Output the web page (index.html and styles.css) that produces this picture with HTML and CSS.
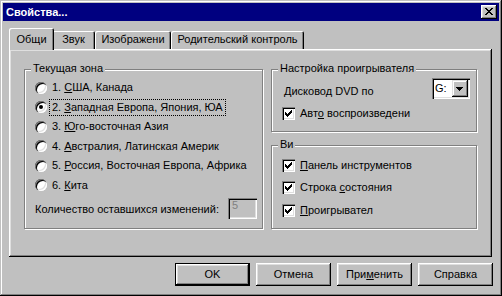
FILE: index.html
```html
<!DOCTYPE html>
<html>

<head>
  <meta charset="utf-8">
  <meta name="viewport" content="width=device-width, initial-scale=1">
  <title>Свойства...</title>
  <link rel="stylesheet" href="styles.css">
</head>

<body>
  <div class="window">
    <div class="titlebar">
      <span class="title">Свойства...</span>
      <button class="close-btn" type="button" title="Закрыть">
        <svg width="8" height="7" viewBox="0 0 8 7" shape-rendering="crispEdges">
          <path fill="#000" d="M0 0h2v1h-2z M6 0h2v1h-2z M1 1h2v1h-2z M5 1h2v1h-2z M2 2h4v1h-4z M3 3h2v1h-2z M2 4h4v1h-4z M1 5h2v1h-2z M5 5h2v1h-2z M0 6h2v1h-2z M6 6h2v1h-2z" />
        </svg>
      </button>
    </div>

    <div class="content">
      <div class="tabs">
        <div class="tab tab-general active">Общи</div>
        <div class="tab tab-sound">Звук</div>
        <div class="tab tab-picture">Изображени</div>
        <div class="tab tab-parental">Родительский контроль</div>
      </div>

      <div class="panel">
        <!-- регион -->
        <div class="group zone-group">
          <div class="group-title">Текущая зона</div>
          <div class="group-body">
            <div class="radio-list">
              <label class="radio-row"><span class="radio"></span><span class="caption">1. <u>С</u>ША, Канада</span></label>
              <label class="radio-row"><span class="radio checked"></span><span class="caption focused">2. <u>З</u>ападная Европа, Япония, ЮА</span></label>
              <label class="radio-row"><span class="radio"></span><span class="caption">3. <u>Ю</u>го-восточная Азия</span></label>
              <label class="radio-row"><span class="radio"></span><span class="caption">4. <u>А</u>встралия, Латинская Америк</span></label>
              <label class="radio-row"><span class="radio"></span><span class="caption">5. <u>Р</u>оссия, Восточная Европа, Африка</span></label>
              <label class="radio-row"><span class="radio"></span><span class="caption">6. <u>К</u>ита</span></label>
            </div>
            <div class="changes-row">
              <span>Количество оставшихся изменений:</span>
              <span class="textbox disabled">5</span>
            </div>
          </div>
        </div>

        <div class="right-col">
          <div class="group player-group">
            <div class="group-title">Настройка проигрывателя</div>
            <div class="group-body">
              <div class="drive-row">
                <span class="drive-label">Дисковод DVD по</span>
                <div class="combo">
                  <span class="combo-value">G:</span>
                  <span class="combo-btn">
                    <svg width="7" height="4" viewBox="0 0 7 4" shape-rendering="crispEdges">
                      <path fill="#000" d="M0 0h7v1h-7z M1 1h5v1h-5z M2 2h3v1h-3z M3 3h1v1h-1z" />
                    </svg>
                  </span>
                </div>
              </div>
              <label class="check-row">
                <span class="checkbox">
                  <svg width="7" height="7" viewBox="0 0 7 7" shape-rendering="crispEdges">
                    <path fill="#000" d="M6 0h1v1h-1z M5 1h2v1h-2z M0 2h1v1h-1z M4 2h3v1h-3z M0 3h2v1h-2z M3 3h3v1h-3z M0 4h5v1h-5z M1 5h3v1h-3z M2 6h1v1h-1z" />
                  </svg>
                </span>
                <span class="caption">Авт<u>о</u> воспроизведени</span>
              </label>
            </div>
          </div>

          <div class="group view-group">
            <div class="group-title">Ви</div>
            <div class="group-body">
              <div class="check-list">
                <label class="check-row">
                  <span class="checkbox">
                    <svg width="7" height="7" viewBox="0 0 7 7" shape-rendering="crispEdges">
                      <path fill="#000" d="M6 0h1v1h-1z M5 1h2v1h-2z M0 2h1v1h-1z M4 2h3v1h-3z M0 3h2v1h-2z M3 3h3v1h-3z M0 4h5v1h-5z M1 5h3v1h-3z M2 6h1v1h-1z" />
                    </svg>
                  </span>
                  <span class="caption"><u>П</u>анель инструментов</span>
                </label>
                <label class="check-row">
                  <span class="checkbox">
                    <svg width="7" height="7" viewBox="0 0 7 7" shape-rendering="crispEdges">
                      <path fill="#000" d="M6 0h1v1h-1z M5 1h2v1h-2z M0 2h1v1h-1z M4 2h3v1h-3z M0 3h2v1h-2z M3 3h3v1h-3z M0 4h5v1h-5z M1 5h3v1h-3z M2 6h1v1h-1z" />
                    </svg>
                  </span>
                  <span class="caption">Строка <u>с</u>остояния</span>
                </label>
                <label class="check-row">
                  <span class="checkbox">
                    <svg width="7" height="7" viewBox="0 0 7 7" shape-rendering="crispEdges">
                      <path fill="#000" d="M6 0h1v1h-1z M5 1h2v1h-2z M0 2h1v1h-1z M4 2h3v1h-3z M0 3h2v1h-2z M3 3h3v1h-3z M0 4h5v1h-5z M1 5h3v1h-3z M2 6h1v1h-1z" />
                    </svg>
                  </span>
                  <span class="caption"><u>П</u>роигрывател</span>
                </label>
              </div>
            </div>
          </div>
        </div>
      </div>

      <div class="buttons">
        <button class="btn default" type="button">OK</button>
        <button class="btn" type="button">Отмена</button>
        <button class="btn" type="button">При<u>м</u>енить</button>
        <button class="btn" type="button">Справка</button>
      </div>
    </div>
  </div>
</body>

</html>
```

FILE: styles.css
```css
body {
  margin: 0;
  background-color: #c0c0c0;
  font-family: "Liberation Sans", Arial, sans-serif;
  font-size: 11px;
  color: #000;
}

.window {
  width: 502px;
  height: 296px;
  box-sizing: border-box;
  padding: 3px;
  background-color: #c0c0c0;
  box-shadow: inset -1px -1px #000, inset 1px 1px #c0c0c0, inset -2px -2px #808080, inset 2px 2px #fff;
}

/* заголовок окна */
.titlebar {
  height: 18px;
  display: flex;
  align-items: center;
  padding: 0 2px 0 3px;
  background-color: #000080;
}

.title {
  color: #fff;
  font-weight: bold;
  line-height: 13px;
}

.close-btn {
  margin-left: auto;
  width: 16px;
  height: 14px;
  padding: 0;
  border: none;
  display: flex;
  align-items: flex-start;
  justify-content: flex-start;
  background-color: #c0c0c0;
  box-shadow: inset -1px -1px #000, inset 1px 1px #fff, inset -2px -2px #808080, inset 2px 2px #dfdfdf;
}

.close-btn svg {
  display: block;
  margin: 3px 0 0 4px;
}

.content {
  padding: 0 6px;
}

/* вкладки */
.tabs {
  display: flex;
  align-items: flex-end;
  height: 21px;
  margin-top: 7px;
  padding-left: 2px;
}

.tab {
  height: 18px;
  box-sizing: border-box;
  padding-top: 2px;
  line-height: 13px;
  text-align: center;
  white-space: nowrap;
  border-radius: 2px 2px 0 0;
  box-shadow: inset 1px 1px #fff, inset -1px 0 #000, inset -2px 0 #808080;
}

.tab-general { width: 41px; }
.tab-sound { width: 43px; }
.tab-picture { width: 76px; }
.tab-parental { width: 133px; }

.tab.active {
  position: relative;
  z-index: 1;
  width: 45px;
  height: 22px;
  margin: 0 -2px -1px;
  padding-top: 5px;
  background-color: #c0c0c0;
}

.panel {
  height: 208px;
  box-sizing: border-box;
  margin-right: 1px;
  padding: 20px 0 0 15px;
  display: flex;
  align-items: flex-start;
  box-shadow: inset -1px -1px #000, inset 1px 1px #fff, inset -2px -2px #808080, inset 2px 2px #dfdfdf;
}

/* рамки групп */
.group {
  box-sizing: border-box;
  border: 1px solid #808080;
  box-shadow: inset 1px 1px #fff, 1px 1px #fff;
}

.group-title {
  display: table;
  margin: -8px 0 0 6px;
  padding: 0 2px;
  line-height: 13px;
  background-color: #c0c0c0;
}

.zone-group {
  width: 239px;
  height: 160px;
}

.zone-group .group-body {
  padding: 0 5px 0 10px;
}

.right-col {
  width: 206px;
  margin-left: 8px;
}

.player-group {
  height: 63px;
}

.player-group .group-body,
.view-group .group-body {
  padding: 0 6px 0 10px;
}

.view-group {
  height: 84px;
  margin-top: 13px;
}

.radio-list {
  margin-top: 3px;
}

.radio-row {
  height: 19.5px;
  display: flex;
  align-items: center;
}

.radio {
  position: relative;
  flex: none;
  width: 12px;
  height: 12px;
  border-radius: 50%;
  background-color: #fff;
  box-shadow: inset 1px 1px #808080, inset 2px 2px #000, inset -1px -1px #fff, inset -2px -2px #dfdfdf;
}

.radio.checked::after {
  content: '';
  position: absolute;
  left: 4px;
  top: 4px;
  width: 4px;
  height: 4px;
  border-radius: 50%;
  background-color: #000;
}

.caption {
  margin-left: 2px;
  padding: 1px 2px;
  line-height: 13px;
  white-space: nowrap;
  border: 1px dotted transparent;
}

.caption.focused {
  border-color: #000;
}

.changes-row {
  height: 21px;
  margin-top: 3px;
  display: flex;
  align-items: center;
  justify-content: space-between;
}

.textbox {
  width: 29px;
  height: 21px;
  box-sizing: border-box;
  padding: 1px 0 0 4px;
  line-height: 13px;
  background-color: #fff;
  box-shadow: inset 1px 1px #808080, inset 2px 2px #000, inset -1px -1px #fff, inset -2px -2px #dfdfdf;
}

.textbox.disabled {
  background-color: #c0c0c0;
  color: #808080;
}

.drive-row {
  margin-top: 3px;
  display: flex;
  align-items: flex-start;
  justify-content: space-between;
}

.drive-label {
  margin: 7px 0 0 2px;
  line-height: 13px;
}

.combo {
  width: 38px;
  height: 21px;
  box-sizing: border-box;
  padding: 2px;
  display: flex;
  background-color: #fff;
  box-shadow: inset 1px 1px #808080, inset 2px 2px #000, inset -1px -1px #fff, inset -2px -2px #dfdfdf;
}

.combo-value {
  flex: 1;
  padding-left: 1px;
  line-height: 17px;
}

.combo-btn {
  width: 16px;
  height: 17px;
  background-color: #c0c0c0;
  box-shadow: inset -1px -1px #000, inset 1px 1px #dfdfdf, inset -2px -2px #808080, inset 2px 2px #fff;
}

.combo-btn svg {
  display: block;
  margin: 7px 0 0 4px;
}

.check-row {
  display: flex;
  align-items: center;
}

.player-group .check-row {
  margin-top: 6px;
}

.check-list {
  margin-top: 3px;
}

.check-list .check-row {
  height: 22.5px;
}

.checkbox {
  flex: none;
  width: 13px;
  height: 13px;
  background-color: #fff;
  box-shadow: inset 1px 1px #808080, inset 2px 2px #000, inset -1px -1px #fff, inset -2px -2px #dfdfdf;
}

.checkbox svg {
  display: block;
  margin: 3px;
}

/* кнопки диалога */
.buttons {
  margin-top: 6px;
  display: flex;
  justify-content: flex-end;
  gap: 6px;
}

.btn {
  width: 75px;
  height: 23px;
  padding: 0 0 1px;
  border: none;
  font: inherit;
  line-height: 13px;
  color: #000;
  background-color: #c0c0c0;
  box-shadow: inset -1px -1px #000, inset 1px 1px #fff, inset -2px -2px #808080, inset 2px 2px #dfdfdf;
}

.btn.default {
  box-shadow: inset 0 0 0 1px #000, inset -2px -2px #000, inset 2px 2px #fff, inset -3px -3px #808080, inset 3px 3px #dfdfdf;
}
```
